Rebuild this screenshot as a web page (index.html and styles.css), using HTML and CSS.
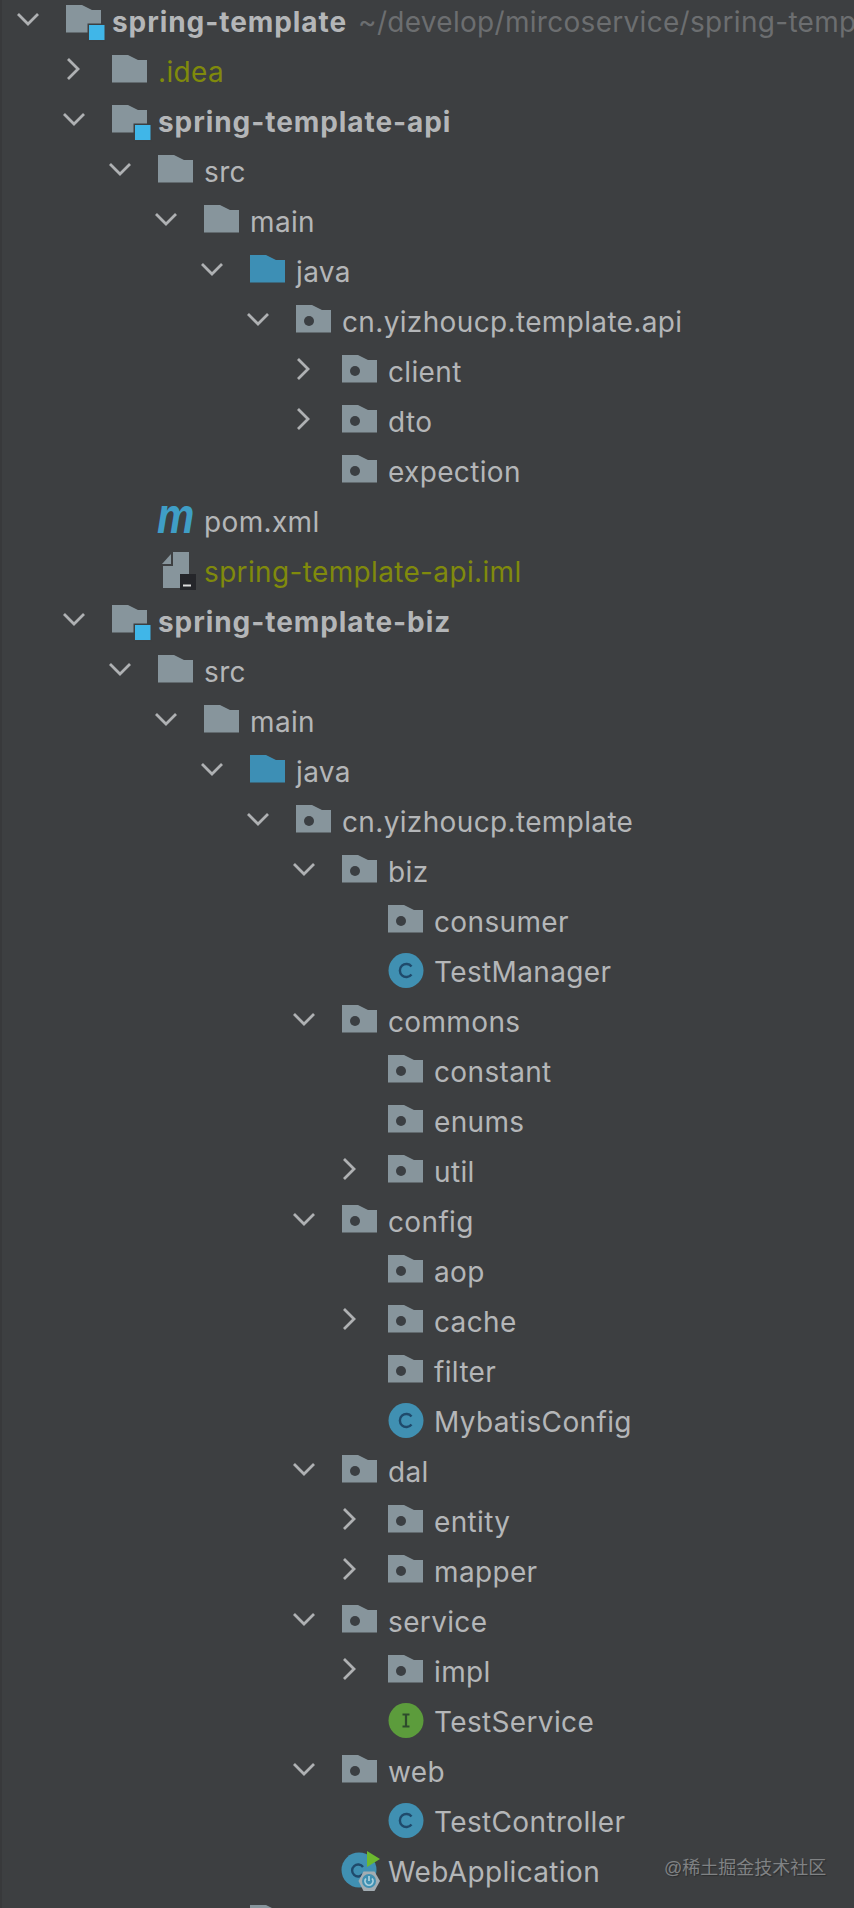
FILE: index.html
```html
<!DOCTYPE html>
<html lang="en">
<head>
<meta charset="utf-8">
<title>Project tree</title>
<link rel="stylesheet" href="styles.css">
</head>
<body>
<svg class="defs" width="0" height="0" aria-hidden="true">
  <symbol id="open" viewBox="0 0 24 14"><path d="M2 2 L12 12 L22 2" fill="none" stroke="#afb1b3" stroke-width="2.8"/></symbol>
  <symbol id="closed" viewBox="0 0 14 24"><path d="M2 2 L12 12 L2 22" fill="none" stroke="#afb1b3" stroke-width="2.8"/></symbol>
  <symbol id="folder" viewBox="0 0 36 36"><path class="grey" d="M0 0H16L26 5H35V27.5H0Z"/></symbol>
  <symbol id="source" viewBox="0 0 36 36"><path class="blue" d="M0 0H16L26 5H35V27.5H0Z"/></symbol>
  <symbol id="package" viewBox="0 0 36 36"><path class="grey" d="M0 0H16L26 5H35V27.5H0Z"/><circle class="hole" cx="13" cy="16" r="5"/></symbol>
  <symbol id="module" viewBox="0 0 36 36"><path class="grey" d="M0 0H16L26 5H35V27.5H0Z"/><rect class="bg" x="21.5" y="18.5" width="18" height="18"/><rect class="cyan" x="23" y="20" width="15.500" height="15"/></symbol>
  <symbol id="class" viewBox="0 0 36 36"><circle class="ball" cx="18" cy="15.500" r="17.500"/><path class="glyph" d="M23.500 11.500 A6.500 6.500 0 1 0 23.500 19.500"/></symbol>
  <symbol id="interface" viewBox="0 0 36 36"><circle class="leaf" cx="18" cy="15.500" r="17.500"/><path class="glyph-i" d="M14.500 9.500H21.500M18 9.500V21.500M14.500 21.500H21.500"/></symbol>
  <symbol id="iml" viewBox="0 0 36 36"><path class="grey" d="M15 -3H31V33H5V11H15Z"/><path class="grey" d="M4 9L13 -1V9Z"/><rect class="term" x="22" y="19" width="16" height="16"/><rect class="dash" x="25" y="29.500" width="8" height="2"/></symbol>
  <symbol id="app" viewBox="0 0 36 36"><circle class="ball" cx="17" cy="15" r="17.500"/><path class="glyph" d="M21 12A6 6 0 1 0 21 19"/><path class="play" d="M25 -4L38 4L25 12Z"/><path class="hex" d="M16.500 26L21.500 16.500H32.500L38 26L32.500 36H21.500Z"/><circle class="ball" cx="27" cy="26" r="7"/><path class="power" d="M24 23.500A4 4 0 1 0 30 23.500M27 21V26"/></symbol>
</svg>
<main class="tree">
  <div class="row d0"><span class="twist"><svg class="chev-open"><use href="#open"/></svg></span><svg class="icon"><use href="#module"/></svg><span class="label strong">spring-template</span><span class="label path">~/develop/mircoservice/spring-temp</span></div>
  <div class="row d1"><span class="twist"><svg class="chev-closed"><use href="#closed"/></svg></span><svg class="icon"><use href="#folder"/></svg><span class="label olive">.idea</span></div>
  <div class="row d1"><span class="twist"><svg class="chev-open"><use href="#open"/></svg></span><svg class="icon"><use href="#module"/></svg><span class="label strong">spring-template-api</span></div>
  <div class="row d2"><span class="twist"><svg class="chev-open"><use href="#open"/></svg></span><svg class="icon"><use href="#folder"/></svg><span class="label">src</span></div>
  <div class="row d3"><span class="twist"><svg class="chev-open"><use href="#open"/></svg></span><svg class="icon"><use href="#folder"/></svg><span class="label">main</span></div>
  <div class="row d4"><span class="twist"><svg class="chev-open"><use href="#open"/></svg></span><svg class="icon"><use href="#source"/></svg><span class="label">java</span></div>
  <div class="row d5"><span class="twist"><svg class="chev-open"><use href="#open"/></svg></span><svg class="icon"><use href="#package"/></svg><span class="label">cn.yizhoucp.template.api</span></div>
  <div class="row d6"><span class="twist"><svg class="chev-closed"><use href="#closed"/></svg></span><svg class="icon"><use href="#package"/></svg><span class="label">client</span></div>
  <div class="row d6"><span class="twist"><svg class="chev-closed"><use href="#closed"/></svg></span><svg class="icon"><use href="#package"/></svg><span class="label">dto</span></div>
  <div class="row d6"><span class="twist"></span><svg class="icon"><use href="#package"/></svg><span class="label">expection</span></div>
  <div class="row d2"><span class="twist"></span><svg class="icon maven"><text transform="translate(-1 28) scale(.84 1)">m</text></svg><span class="label">pom.xml</span></div>
  <div class="row d2"><span class="twist"></span><svg class="icon"><use href="#iml"/></svg><span class="label olive">spring-template-api.iml</span></div>
  <div class="row d1"><span class="twist"><svg class="chev-open"><use href="#open"/></svg></span><svg class="icon"><use href="#module"/></svg><span class="label strong">spring-template-biz</span></div>
  <div class="row d2"><span class="twist"><svg class="chev-open"><use href="#open"/></svg></span><svg class="icon"><use href="#folder"/></svg><span class="label">src</span></div>
  <div class="row d3"><span class="twist"><svg class="chev-open"><use href="#open"/></svg></span><svg class="icon"><use href="#folder"/></svg><span class="label">main</span></div>
  <div class="row d4"><span class="twist"><svg class="chev-open"><use href="#open"/></svg></span><svg class="icon"><use href="#source"/></svg><span class="label">java</span></div>
  <div class="row d5"><span class="twist"><svg class="chev-open"><use href="#open"/></svg></span><svg class="icon"><use href="#package"/></svg><span class="label">cn.yizhoucp.template</span></div>
  <div class="row d6"><span class="twist"><svg class="chev-open"><use href="#open"/></svg></span><svg class="icon"><use href="#package"/></svg><span class="label">biz</span></div>
  <div class="row d7"><span class="twist"></span><svg class="icon"><use href="#package"/></svg><span class="label">consumer</span></div>
  <div class="row d7"><span class="twist"></span><svg class="icon"><use href="#class"/></svg><span class="label">TestManager</span></div>
  <div class="row d6"><span class="twist"><svg class="chev-open"><use href="#open"/></svg></span><svg class="icon"><use href="#package"/></svg><span class="label">commons</span></div>
  <div class="row d7"><span class="twist"></span><svg class="icon"><use href="#package"/></svg><span class="label">constant</span></div>
  <div class="row d7"><span class="twist"></span><svg class="icon"><use href="#package"/></svg><span class="label">enums</span></div>
  <div class="row d7"><span class="twist"><svg class="chev-closed"><use href="#closed"/></svg></span><svg class="icon"><use href="#package"/></svg><span class="label">util</span></div>
  <div class="row d6"><span class="twist"><svg class="chev-open"><use href="#open"/></svg></span><svg class="icon"><use href="#package"/></svg><span class="label">config</span></div>
  <div class="row d7"><span class="twist"></span><svg class="icon"><use href="#package"/></svg><span class="label">aop</span></div>
  <div class="row d7"><span class="twist"><svg class="chev-closed"><use href="#closed"/></svg></span><svg class="icon"><use href="#package"/></svg><span class="label">cache</span></div>
  <div class="row d7"><span class="twist"></span><svg class="icon"><use href="#package"/></svg><span class="label">filter</span></div>
  <div class="row d7"><span class="twist"></span><svg class="icon"><use href="#class"/></svg><span class="label">MybatisConfig</span></div>
  <div class="row d6"><span class="twist"><svg class="chev-open"><use href="#open"/></svg></span><svg class="icon"><use href="#package"/></svg><span class="label">dal</span></div>
  <div class="row d7"><span class="twist"><svg class="chev-closed"><use href="#closed"/></svg></span><svg class="icon"><use href="#package"/></svg><span class="label">entity</span></div>
  <div class="row d7"><span class="twist"><svg class="chev-closed"><use href="#closed"/></svg></span><svg class="icon"><use href="#package"/></svg><span class="label">mapper</span></div>
  <div class="row d6"><span class="twist"><svg class="chev-open"><use href="#open"/></svg></span><svg class="icon"><use href="#package"/></svg><span class="label">service</span></div>
  <div class="row d7"><span class="twist"><svg class="chev-closed"><use href="#closed"/></svg></span><svg class="icon"><use href="#package"/></svg><span class="label">impl</span></div>
  <div class="row d7"><span class="twist"></span><svg class="icon"><use href="#interface"/></svg><span class="label">TestService</span></div>
  <div class="row d6"><span class="twist"><svg class="chev-open"><use href="#open"/></svg></span><svg class="icon"><use href="#package"/></svg><span class="label">web</span></div>
  <div class="row d7"><span class="twist"></span><svg class="icon"><use href="#class"/></svg><span class="label">TestController</span></div>
  <div class="row d6"><span class="twist"></span><svg class="icon"><use href="#app"/></svg><span class="label">WebApplication</span></div>
  <div class="row d4"><span class="twist"></span><svg class="icon"><use href="#folder"/></svg></div>
</main>
<div class="watermark">@稀土掘金技术社区</div>
</body>
</html>
```
FILE: styles.css
```css
html, body {
  margin: 0;
  padding: 0;
  height: 1908px;
  overflow: hidden;
  background: #3d3f41;
}
body {
  position: relative;
  box-shadow: inset 2px 0 #38393b;
  font-family: Inter, "Noto Sans", sans-serif;
  font-size: 28px;
  letter-spacing: 0.35px;
  color: #b4b6b8;
}
.defs { position: absolute; }
.tree { margin-top: -2px; }
.row {
  display: flex;
  align-items: center;
  height: 50px;
  white-space: nowrap;
}
.d0 { padding-left: 0; }
.d1 { padding-left: 46px; }
.d2 { padding-left: 92px; }
.d3 { padding-left: 138px; }
.d4 { padding-left: 184px; }
.d5 { padding-left: 230px; }
.d6 { padding-left: 276px; }
.d7 { padding-left: 322px; }
.twist {
  display: flex;
  align-items: center;
  justify-content: center;
  flex: none;
  width: 56px;
  height: 36px;
  margin-right: 10px;
  margin-top: -8px;
}
.chev-open { width: 24px; height: 14px; overflow: visible; }
.chev-closed { width: 14px; height: 24px; overflow: visible; margin-right: 2px; }
.icon {
  flex: none;
  width: 36px;
  height: 36px;
  overflow: visible;
  margin-right: 10px;
}
.icon use { overflow: visible; }
symbol { overflow: visible; }
.grey { fill: #87959c; }
.blue { fill: #3d8fb5; }
.hole { fill: #3b3f43; }
.bg { fill: #3d3f41; }
.cyan { fill: #40b6e8; }
.ball { fill: #4090b2; }
.leaf { fill: #5c9c3c; }
.glyph { fill: none; stroke: #1f4a6b; stroke-width: 2.4; }
.glyph-i { fill: none; stroke: #2e4b2c; stroke-width: 2.2; }
.term { fill: #25262a; }
.dash { fill: #dddddd; }
.play { fill: #6cb82f; }
.hex { fill: #a3adb3; }
.power { fill: none; stroke: #a9d0de; stroke-width: 1.8; }
.maven text {
  font-family: "Liberation Sans", sans-serif;
  font-weight: 700;
  font-style: italic;
  font-size: 50px;
  letter-spacing: 0;
  fill: #3f9ec6;
}
.label { line-height: 50px; padding-bottom: 2px; }
.strong { font-weight: 700; letter-spacing: 0.93px; }
.olive { color: #808a0c; }
.path { margin-left: 11px; color: #6c6e70; letter-spacing: 0.3px; }
.watermark {
  position: absolute;
  left: 664px;
  top: 1856px;
  font-family: "Liberation Sans", "Noto Sans CJK SC", sans-serif;
  font-size: 18px;
  line-height: 24px;
  letter-spacing: 0;
  color: #808284;
  text-shadow: 1px 1px 1px #2c2e30;
  white-space: nowrap;
}
```
